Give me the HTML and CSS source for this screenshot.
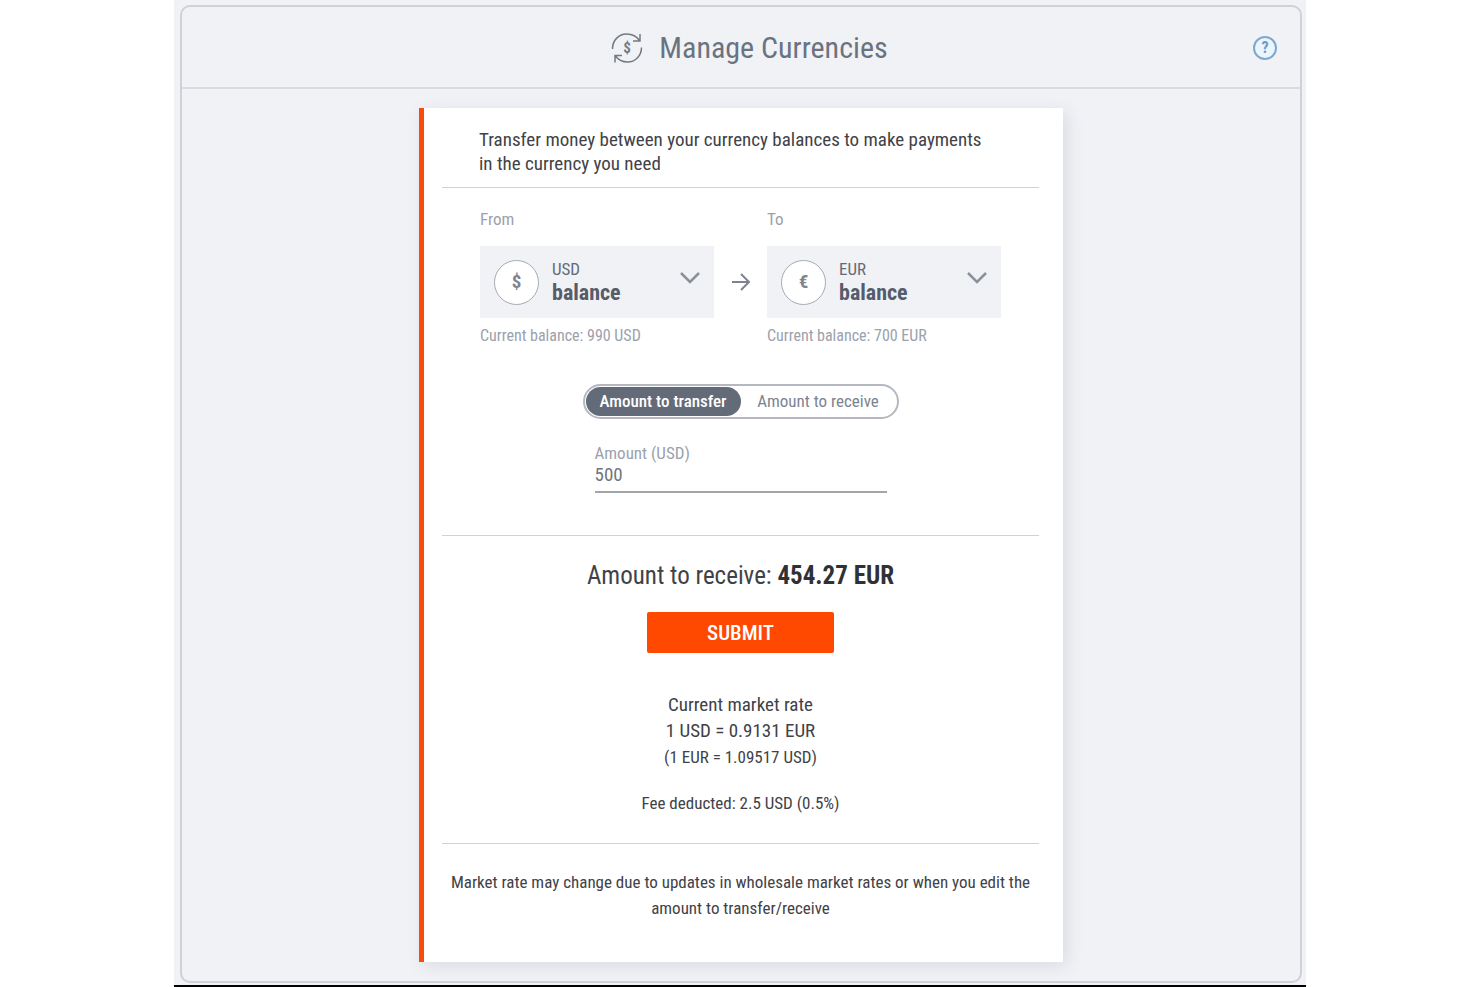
FILE: index.html
```
<!DOCTYPE html>
<html lang="en">
<head>
    <meta charset="UTF-8">
    <meta name="viewport" content="width=device-width, initial-scale=1.0">
    <title>Manage Currencies</title>
    <link rel="stylesheet" href="styles.css">
</head>
<body>

    <div class="page">
        <main class="panel">
            <header class="panel-header">
                <svg class="exchange-icon" viewBox="0 0 32 32" aria-hidden="true">
                    <path d="M1.5 17C1.5 8 8 2 15.5 2c5.5 0 10.5 2.5 13.5 7M29 2v7h-7"/>
                    <path d="M30.5 15.5C30.5 24 24 30 16.5 30c-5 0-9.5-2.5-12.5-6.5M4 30.5v-7h7"/>
                    <text x="16" y="21">$</text>
                </svg>
                <h1>Manage Currencies</h1>
                <button class="help" type="button" aria-label="Help">?</button>
            </header>

            <form class="card">
                <p class="intro">Transfer money between your currency balances to make payments in the currency you need</p>

                <section class="accounts">
                    <div class="account">
                        <span class="caption">From</span>
                        <div class="account-box">
                            <span class="coin">$</span>
                            <div class="account-name">
                                <label for="from">USD</label>
                                <select id="from"><option>balance</option></select>
                            </div>
                            <svg class="chevron" viewBox="0 0 20 12" aria-hidden="true"><path d="M1 1l9 9 9-9"/></svg>
                        </div>
                        <span class="current">Current balance: 990 USD</span>
                    </div>
                    <svg class="arrow" viewBox="0 0 20 18" aria-hidden="true"><path d="M1 9h17M10 1l8 8-8 8"/></svg>
                    <div class="account">
                        <span class="caption">To</span>
                        <div class="account-box">
                            <span class="coin">€</span>
                            <div class="account-name">
                                <label for="to">EUR</label>
                                <select id="to"><option>balance</option></select>
                            </div>
                            <svg class="chevron" viewBox="0 0 20 12" aria-hidden="true"><path d="M1 1l9 9 9-9"/></svg>
                        </div>
                        <span class="current">Current balance: 700 EUR</span>
                    </div>
                </section>

                <div class="toggle">
                    <input type="radio" name="mode" id="transfer" checked>
                    <label for="transfer">Amount to transfer</label>
                    <input type="radio" name="mode" id="receive">
                    <label for="receive">Amount to receive</label>
                </div>

                <div class="amount">
                    <label for="amount">Amount (USD)</label>
                    <input type="text" id="amount" value="500">
                </div>

                <section class="summary">
                    <p class="total">Amount to receive: <strong>454.27 EUR</strong></p>
                    <button class="submit" type="submit">SUBMIT</button>
                    <p class="rate">Current market rate<br>1 USD = 0.9131 EUR</p>
                    <p class="small">(1 EUR = 1.09517 USD)</p>
                    <p class="small fee">Fee deducted: 2.5 USD (0.5%)</p>
                </section>

                <p class="note">Market rate may change due to updates in wholesale market rates or when you edit the amount to transfer/receive</p>
            </form>
        </main>
    </div>

</body>
</html>
```
FILE: styles.css
```
* {
    box-sizing: border-box;
}
body {
    margin: 0;
    background: #fff;
    color: #414247;
    font-family: "Roboto Condensed", Roboto, sans-serif;
    font-size: 18px;
}
h1, p {
    margin: 0;
    font-weight: 400;
}
button, input, select {
    font-family: inherit;
}
.page {
    max-width: 1132px;
    margin: 0 auto;
    padding: 5px 4px 2px 6px;
    background: #f1f2f6;
    border-bottom: 2px solid #000;
}
.panel {
    border: 2px solid #d0d1d6;
    border-radius: 10px;
    padding-bottom: 19px;
}
.panel-header {
    display: grid;
    grid-template-columns: 1fr auto auto 1fr;
    align-items: center;
    height: 82px;
    padding: 1px 23px 0 40px;
    border-bottom: 2px solid #dadbe0;
    color: #6b7280;
}
.panel-header h1 {
    font-size: 30px;
    line-height: 36px;
}
.exchange-icon {
    grid-column: 2;
    width: 32px;
    height: 32px;
    margin-right: 16px;
    fill: none;
    stroke: #737a86;
    stroke-width: 1.5;
}
.exchange-icon text {
    fill: #737a86;
    stroke: none;
    font-size: 15px;
    font-weight: 700;
    text-anchor: middle;
}
.help {
    justify-self: end;
    width: 24px;
    height: 24px;
    padding: 0;
    border: 2px solid #7fa8cf;
    border-radius: 50%;
    background: #eaf5fd;
    color: #6f9cc6;
    font-size: 16px;
    font-weight: 700;
    line-height: 20px;
    cursor: pointer;
}
.card {
    max-width: 644px;
    margin: 19px auto 0;
    padding: 20px 24px 41px 18px;
    border-left: 5px solid #f94c0b;
    background: #fff;
    box-shadow: 4px 4px 16px rgba(60, 65, 90, 0.12);
}
.intro {
    padding: 0 48px 11px 37px;
    border-bottom: 1px solid #d0d2d6;
    font-size: 19px;
    line-height: 24px;
}
.accounts {
    display: grid;
    grid-template-columns: 1fr 53px 1fr;
    align-items: center;
    padding: 19px 38px 0;
}
.account {
    display: flex;
    flex-direction: column;
    color: #9ba1ad;
}
.caption {
    margin-bottom: 15px;
    font-size: 17px;
    line-height: 24px;
}
.current {
    margin-top: 6px;
    font-size: 16px;
    line-height: 24px;
}
.account-box {
    display: flex;
    align-items: center;
    height: 72px;
    padding: 0 14px;
    background: #f1f2f6;
}
.coin {
    flex: none;
    width: 45px;
    height: 45px;
    margin-right: 13px;
    border: 1px solid #a5aab3;
    border-radius: 50%;
    background: #fff;
    color: #7d8490;
    font-size: 19px;
    font-weight: 700;
    line-height: 42px;
    text-align: center;
}
.account-name {
    display: flex;
    flex: 1;
    flex-direction: column;
    min-width: 0;
    color: #646b78;
}
.account-name label {
    font-size: 17px;
    line-height: 22px;
}
.account-name select {
    appearance: none;
    width: 100%;
    padding: 0;
    border: 0;
    background: none;
    color: #565d6a;
    font-size: 22px;
    font-weight: 700;
    line-height: 26px;
}
.chevron {
    width: 20px;
    height: 12px;
    margin-bottom: 8px;
    fill: none;
    stroke: #8a919d;
    stroke-width: 2.5;
}
.arrow {
    width: 20px;
    height: 18px;
    margin-top: 9px;
    justify-self: center;
    fill: none;
    stroke: #7d8490;
    stroke-width: 2;
}
.toggle {
    display: grid;
    grid-template-columns: 1fr 1fr;
    max-width: 316px;
    margin: 36px auto 0;
    padding: 1px;
    border: 2px solid #b4b9c1;
    border-radius: 18px;
}
.toggle input {
    position: absolute;
    opacity: 0;
}
.toggle label {
    border-radius: 15px;
    color: #7d8490;
    font-size: 17px;
    line-height: 29px;
    text-align: center;
    cursor: pointer;
}
.toggle input:checked + label {
    background: #636a78;
    color: #fff;
    font-weight: 500;
}
.amount {
    display: flex;
    flex-direction: column;
    max-width: 292px;
    margin: 24px auto 42px;
}
.amount label {
    color: #9ba1ad;
    font-size: 17px;
    line-height: 20px;
}
.amount input {
    height: 30px;
    padding: 0 0 6px;
    border: 0;
    border-bottom: 2px solid #a3a5aa;
    color: #6f7580;
    font-size: 19px;
}
.summary {
    display: flex;
    flex-direction: column;
    align-items: center;
    padding: 24px 0 27px;
    border: solid #d0d2d6;
    border-width: 1px 0;
    text-align: center;
}
.total {
    font-size: 25px;
    line-height: 32px;
}
.total strong {
    color: #303136;
}
.submit {
    width: 187px;
    height: 41px;
    margin: 20px 0 39px;
    padding: 0;
    border: 0;
    border-radius: 2px;
    background: #ff4800;
    color: #fff;
    font-size: 21px;
    font-weight: 500;
    cursor: pointer;
}
.rate {
    font-size: 19px;
    line-height: 26px;
}
.small {
    font-size: 17px;
    line-height: 26px;
}
.fee {
    margin-top: 20px;
}
.note {
    padding-top: 25px;
    font-size: 17px;
    line-height: 26px;
    text-align: center;
}
```
